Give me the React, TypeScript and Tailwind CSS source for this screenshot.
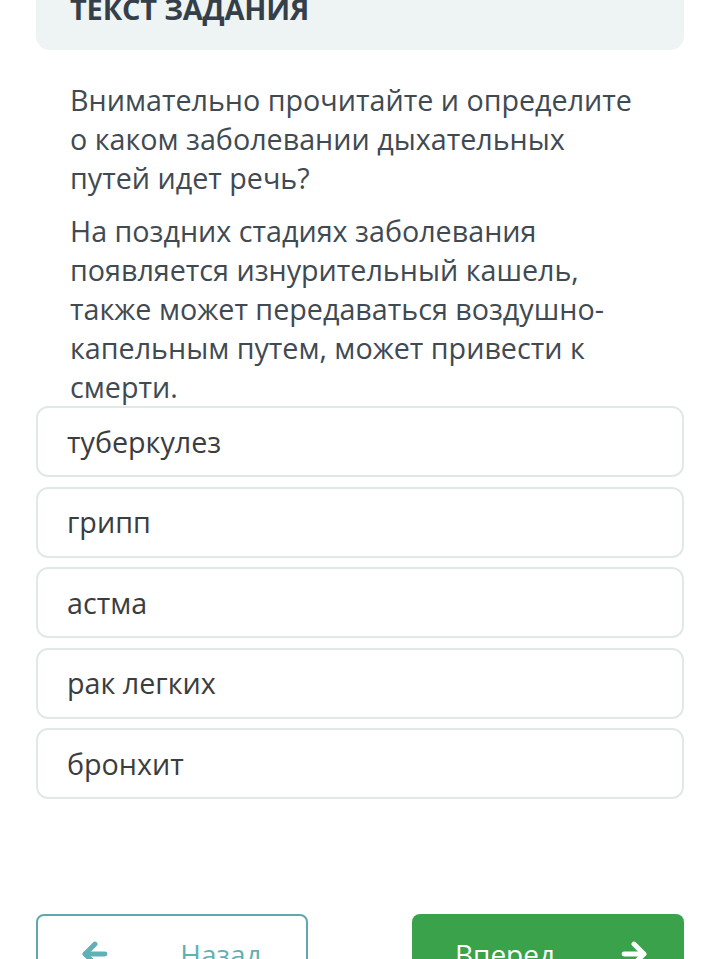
import { ArrowLeft, ArrowRight } from 'lucide-react';

const options = ['туберкулез', 'грипп', 'астма', 'рак легких', 'бронхит'];

export default function App() {
  return (
    <div
      className="h-[959px] overflow-hidden bg-white px-9"
      style={{ fontFamily: '"Open Sans", "Noto Sans", sans-serif' }}
    >
      <div className="-mt-[30px] flex h-[80px] items-end rounded-b-[14px] bg-[#eef3f3] px-[34px] pb-[23px]">
        <h2 className="text-[29px] font-bold leading-[36px] tracking-[-0.2px] text-[#343f49]">
          ТЕКСТ ЗАДАНИЯ
        </h2>
      </div>

      <div className="px-[34px] pt-[30px] text-[28.7px] leading-[39px] text-[#3f4a52]">
        <p>
          Внимательно прочитайте и определите
          <br />о каком заболевании дыхательных
          <br />
          путей идет речь?
        </p>
        <p className="mt-[14px]">
          На поздних стадиях заболевания
          <br />
          появляется изнурительный кашель,
          <br />
          также может передаваться воздушно-
          <br />
          капельным путем, может привести к
          <br />
          смерти.
        </p>
      </div>

      <div className="flex flex-col gap-[9.5px]">
        {options.map((o) => (
          <div
            key={o}
            className="flex h-[71px] items-center rounded-[12px] border-2 border-[#e1e8e8] px-[29px] text-[28.7px] text-[#3b3d3f]"
          >
            {o}
          </div>
        ))}
      </div>

      <div className="mt-[115px] flex justify-between">
        <button className="flex h-[80px] w-[272px] items-center justify-center gap-[68px] rounded-[8px] border-2 border-[#5fa9ae] pr-[4px] text-[28px] text-[#5fb1b5]">
          <ArrowLeft size={34} strokeWidth={3.5} className="text-[#5fb1b5]" />
          <span>Назад</span>
        </button>
        <button className="flex h-[80px] w-[272px] items-center justify-center gap-[62px] rounded-[8px] bg-[#3aa24b] pl-[10px] text-[28px] text-white">
          <span>Вперед</span>
          <ArrowRight size={34} strokeWidth={3.5} />
        </button>
      </div>
    </div>
  );
}
